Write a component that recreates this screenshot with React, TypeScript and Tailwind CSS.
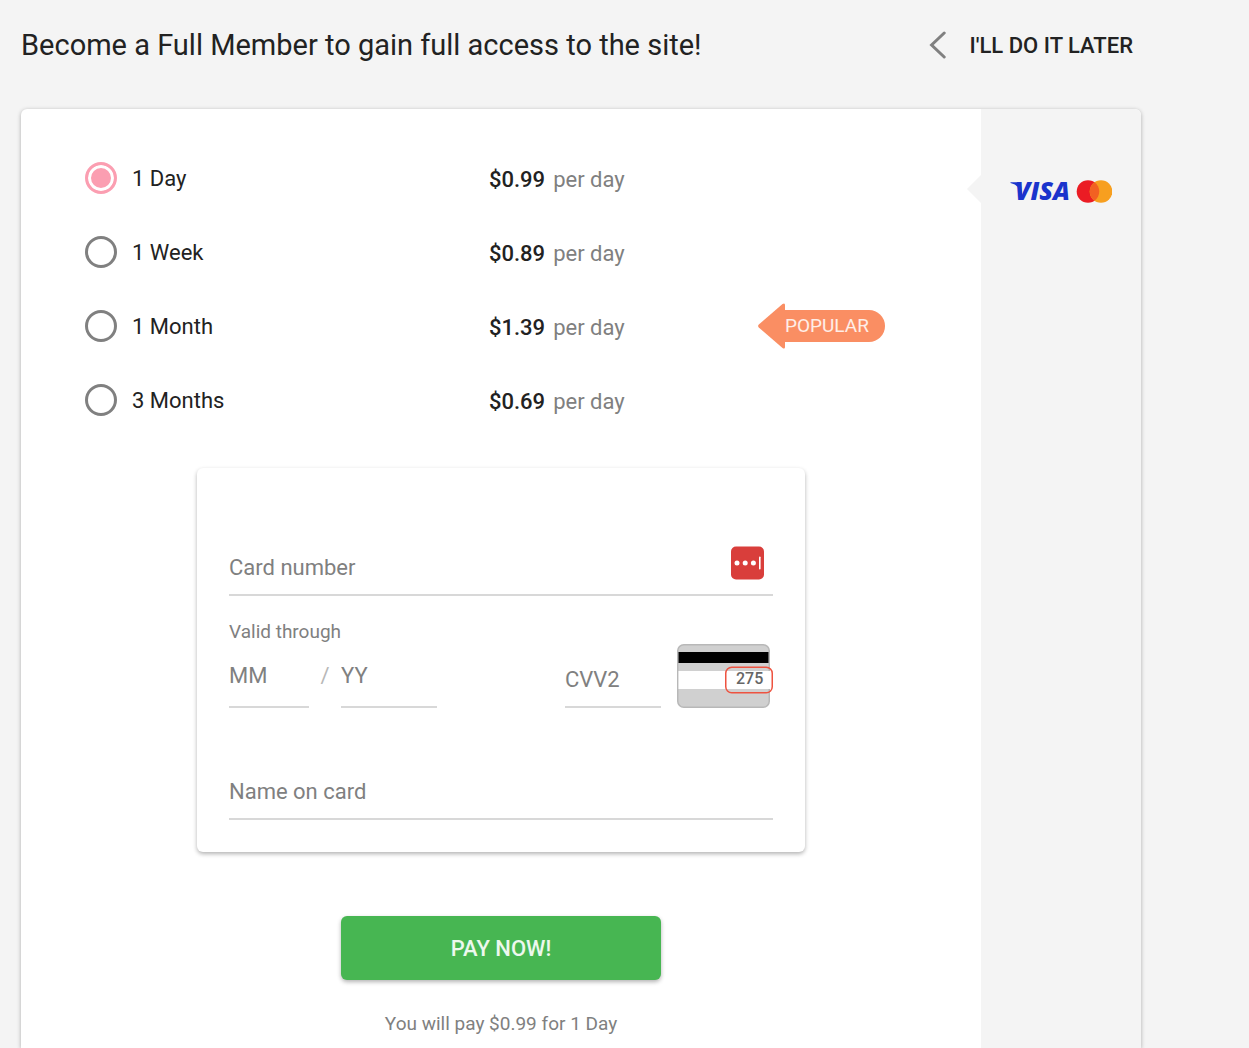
import { useState } from 'react'

interface Plan {
  id: string
  label: string
  price: string
  popular?: boolean
}

const plans: Plan[] = [
  { id: 'day', label: '1 Day', price: '$0.99' },
  { id: 'week', label: '1 Week', price: '$0.89' },
  { id: 'month', label: '1 Month', price: '$1.39', popular: true },
  { id: 'quarter', label: '3 Months', price: '$0.69' },
]

const fieldClass =
  'min-w-0 bg-transparent text-[22px] leading-8 text-[#222] outline-none placeholder:text-[#808080] placeholder:opacity-100'

function PopularBadge() {
  return (
    <span className="flex items-center">
      <svg width="27" height="46" viewBox="0 0 27 46" fill="#fa8e63">
        <path d="M0.8 21.6 L24.5 1 Q27 -0.4 27 2 V44 Q27 46.4 24.5 45 L0.8 24.4 Q-0.6 23 0.8 21.6 Z" />
      </svg>
      <span className="h-8 rounded-r-full bg-[#fa8e63] pr-4 text-[19px] leading-8 text-white/85">POPULAR</span>
    </span>
  )
}

function PlanRow({ plan, checked, onSelect }: { plan: Plan; checked: boolean; onSelect: () => void }) {
  return (
    <div className="flex h-[74px] items-center">
      <label className="flex w-[404px] cursor-pointer items-center gap-[15px] text-[22px] text-[#222]">
        <input
          type="radio"
          name="plan"
          value={plan.id}
          checked={checked}
          onChange={onSelect}
          className="h-8 w-8 shrink-0 appearance-none rounded-full border-3 border-[#808080] bg-white checked:border-[#fb9eb1] checked:bg-[#fb9eb1] checked:shadow-[inset_0_0_0_3px_white]"
        />
        {plan.label}
      </label>
      <p className="flex w-[269px] gap-2 pt-0.5 text-[22px] text-[#808080]">
        <span className="font-medium text-[#222]">{plan.price}</span>
        <span>per day</span>
      </p>
      {plan.popular && <PopularBadge />}
    </div>
  )
}

// Back of the card with the security code circled
function CvvHint() {
  return (
    <svg width="96" height="64" viewBox="0 0 96 64" className="shrink-0" aria-hidden="true">
      <rect x="0.75" y="0.75" width="91.5" height="62.5" rx="6" fill="#d0d0d0" stroke="#b8b8b8" strokeWidth="1.5" />
      <rect x="1.5" y="8" width="90" height="11" fill="#000" />
      <rect x="1.5" y="27" width="91.5" height="18" fill="#fff" />
      <rect x="48.75" y="23.25" width="46.5" height="25.5" rx="6" fill="none" stroke="#ee5340" strokeWidth="1.5" />
      <text x="59" y="40" fontSize="16" fontWeight="500" fill="#666" fontFamily="Roboto, sans-serif">
        275
      </text>
    </svg>
  )
}

function CardLogos() {
  return (
    <svg width="102" height="40" viewBox="0 -8 102 40" role="img" aria-label="Visa, Mastercard">
      <path d="M0.5 2.3 H8 Q10.2 2.6 11 5.5 L12.5 17 H10.5 L7.8 7 Q5.5 4 0.5 2.9 Z" fill="#1a34cc" />
      <text x="5" y="20" fontSize="25" fontWeight="800" fontStyle="italic" fill="#1a34cc" fontFamily="'Open Sans', sans-serif">
        VISA
      </text>
      <circle cx="78" cy="11.5" r="11.3" fill="#eb1c24" />
      <circle cx="91" cy="11.5" r="11.3" fill="#f79f1f" />
      <path d="M84.5 2.3 A11.3 11.3 0 0 1 84.5 20.7 A11.3 11.3 0 0 1 84.5 2.3 Z" fill="#f26122" />
    </svg>
  )
}

export default function App() {
  const [selected, setSelected] = useState('day')
  const current = plans.find((p) => p.id === selected) ?? plans[0]

  return (
    <div className="min-h-screen bg-[#f4f4f4] px-[21px] font-[Roboto,sans-serif] text-[#222]">
      <div className="flex min-h-screen w-full max-w-[1120px] flex-col">
        <header className="flex h-[109px] items-center justify-between pr-2 pb-[19px]">
          <h1 className="text-[29px] leading-10">Become a Full Member to gain full access to the site!</h1>
          <a href="#later" className="flex items-center gap-6 text-[22px] font-medium">
            <svg width="17" height="28" viewBox="0 0 17 28" fill="none" stroke="#808080" strokeWidth="3">
              <path d="M15.2 2 L2.6 14 L15.2 26" strokeLinecap="round" />
            </svg>
            I'LL DO IT LATER
          </a>
        </header>

        <main className="flex grow rounded-t-md bg-white shadow-[0_1px_4px_rgba(0,0,0,0.3)]">
          <form className="flex min-w-0 grow flex-col items-center pt-8" onSubmit={(e) => e.preventDefault()}>
            <div className="w-full px-16">
              {plans.map((plan) => (
                <PlanRow key={plan.id} plan={plan} checked={plan.id === selected} onSelect={() => setSelected(plan.id)} />
              ))}
            </div>

            <section className="mt-[31px] w-full max-w-[608px] rounded-md px-8 pt-16 pb-8 shadow-[0_2px_4px_rgba(0,0,0,0.3)]">
              <div className="flex h-16 items-end border-b-2 border-[#d8d8d8] pr-2">
                <input aria-label="Card number" placeholder="Card number" className={`${fieldClass} grow pb-[10px]`} />
                <button type="button" aria-label="Fill from password manager" className="cursor-pointer pb-[14px]">
                  <svg width="34" height="34" viewBox="0 0 34 34">
                    <rect x="0" y="0.5" width="33" height="33" rx="5" fill="#d93e3b" />
                    <g fill="#fff">
                      <circle cx="6" cy="17" r="2.5" />
                      <circle cx="14.2" cy="17" r="2.5" />
                      <circle cx="22.4" cy="17" r="2.5" />
                      <rect x="28" y="10.5" width="1.6" height="13" rx="0.8" />
                    </g>
                  </svg>
                </button>
              </div>

              <div className="flex h-28 items-end">
                <fieldset className="flex items-end">
                  <legend className="pb-3 text-[19px] leading-8 text-[#808080]">Valid through</legend>
                  <input aria-label="Month" placeholder="MM" className={`${fieldClass} h-12 w-20 border-b-2 border-[#d8d8d8] pb-4`} />
                  <span className="h-12 w-8 text-center text-[22px] leading-8 text-[#b8b8b8]">/</span>
                  <input aria-label="Year" placeholder="YY" className={`${fieldClass} h-12 w-24 border-b-2 border-[#d8d8d8] pb-4`} />
                </fieldset>
                <input aria-label="CVV2" placeholder="CVV2" className={`${fieldClass} mr-4 ml-auto h-12 w-24 border-b-2 border-[#d8d8d8] pb-2`} />
                <CvvHint />
              </div>

              <div className="flex h-28 items-end border-b-2 border-[#d8d8d8] pb-[10px]">
                <input aria-label="Name on card" placeholder="Name on card" className={`${fieldClass} grow`} />
              </div>
            </section>

            <button
              type="submit"
              className="mt-16 h-16 w-full max-w-80 cursor-pointer rounded-md bg-[#47b652] text-[22px] font-medium text-white/90 shadow-[0_2px_4px_rgba(0,0,0,0.3)]"
            >
              PAY NOW!
            </button>
            <p className="mt-[30px] text-[19px] leading-7 text-[#808080]">
              You will pay {current.price} for {current.label}
            </p>
          </form>

          <aside className="relative flex w-40 shrink-0 justify-center rounded-tr-md bg-[#f4f4f4] pt-[63px]">
            <svg width="14" height="28" viewBox="0 0 14 28" fill="#f4f4f4" className="absolute top-[66px] -left-[14px]">
              <path d="M14 0 L0 14 L14 28 Z" />
            </svg>
            <CardLogos />
          </aside>
        </main>
      </div>
    </div>
  )
}
